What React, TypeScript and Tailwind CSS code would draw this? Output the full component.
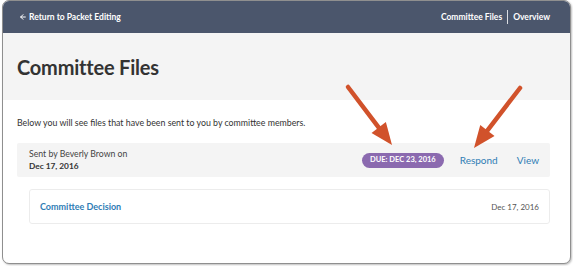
import { ArrowLeft } from 'lucide-react';

function Arrow({ x1, y1, x2, y2 }: { x1: number; y1: number; x2: number; y2: number }) {
  // shaft + triangular head pointing at (x2, y2)
  const dx = x2 - x1;
  const dy = y2 - y1;
  const len = Math.sqrt(dx * dx + dy * dy);
  const ux = dx / len;
  const uy = dy / len;
  const headLen = 22;
  const headHalf = 9;
  const bx = x2 - ux * headLen;
  const by = y2 - uy * headLen;
  const px = -uy;
  const py = ux;
  const head = `${x2},${y2} ${bx + px * headHalf},${by + py * headHalf} ${bx - px * headHalf},${by - py * headHalf}`;
  return (
    <g>
      <line x1={x1} y1={y1} x2={bx + ux * 2} y2={by + uy * 2} stroke="#d1522b" strokeWidth={4.5} strokeLinecap="round" />
      <polygon points={head} fill="#d1522b" />
    </g>
  );
}

export default function App() {
  return (
    <div className="relative w-[573px] h-[266px] bg-white font-['Lato',sans-serif]">
      {/* Window */}
      <div className="ml-[2px] w-[569px] h-[264px] rounded-[7px] border border-[#8f8f8f] shadow-[1px_1px_2px_rgba(0,0,0,0.25)] overflow-hidden flex flex-col bg-white">
        {/* Top bar */}
        <div className="h-[32px] shrink-0 bg-[#4b566c] flex items-center justify-between pl-[16px] pr-[20px] text-white text-[8.5px] font-bold">
          <div className="flex items-center gap-[2px]">
            <ArrowLeft size={8} strokeWidth={3} />
            <span>Return to Packet Editing</span>
          </div>
          <div className="flex items-center">
            <span>Committee Files</span>
            <span className="mx-[5px] w-px h-[14px] bg-white/80" />
            <span>Overview</span>
          </div>
        </div>

        {/* Title band */}
        <div className="h-[67px] shrink-0 bg-[#f4f4f4] flex items-center px-[14px]">
          <h1 className="text-[20px] font-bold text-[#333] tracking-[-0.2px]">Committee Files</h1>
        </div>

        {/* Content */}
        <div className="pl-[14px] pr-[20px]">
          <p className="mt-[17px] text-[8.8px] text-[#333] leading-[12px]">
            Below you will see files that have been sent to you by committee members.
          </p>

          <div className="mt-[14px] h-[34px] bg-[#f4f4f4] rounded-[2px] flex items-center justify-between pl-[12px] pr-[11px]">
            <div className="text-[8.7px] leading-[12px] text-[#444]">
              <div>Sent by Beverly Brown on</div>
              <div className="font-bold text-[#333] text-[8.3px]">Dec 17, 2016</div>
            </div>
            <div className="flex items-center">
              <span className="h-[15px] px-[8px] rounded-full bg-[#8b6aaf] text-white text-[7.5px] font-bold flex items-center">
                DUE: DEC 23, 2016
              </span>
              <span className="ml-[16px] text-[10px] text-[#2f7db5]">Respond</span>
              <span className="ml-[19px] text-[10px] text-[#2f7db5]">View</span>
            </div>
          </div>

          <div className="mt-[12px] ml-[12px] h-[35px] border border-[#ececec] rounded-[3px] flex items-center justify-between pl-[10px] pr-[10px]">
            <span className="text-[9px] font-bold text-[#2f7db5]">Committee Decision</span>
            <span className="text-[8px] text-[#555]">Dec 17, 2016</span>
          </div>
        </div>
      </div>

      {/* Callout arrows */}
      <svg className="absolute inset-0 pointer-events-none" width={573} height={266}>
        <Arrow x1={348} y1={87} x2={392} y2={145} />
        <Arrow x1={520} y1={88} x2={474} y2={148} />
      </svg>
    </div>
  );
}
